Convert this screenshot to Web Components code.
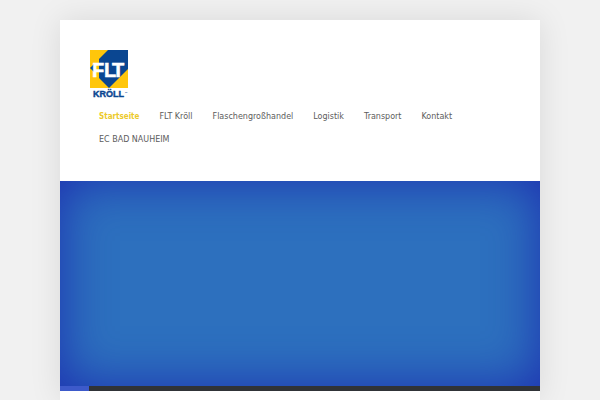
<!DOCTYPE html>
<html lang="de">
<head>
<meta charset="utf-8">
<meta name="viewport" content="width=device-width, initial-scale=1">
<title>FLT Kröll</title>
<style>
  body { margin: 0; background: #f1f1f1; color: #5c5c5c; font: 8px/23px "DejaVu Sans", sans-serif; }
</style>
</head>
<body>
<site-page>
  <site-header slot="header">
    <site-logo></site-logo>
    <site-nav>
      <nav-item href="#start" current>Startseite</nav-item>
      <nav-item href="#flt">FLT Kröll</nav-item>
      <nav-item href="#flaschen">Flaschengroßhandel</nav-item>
      <nav-item href="#logistik">Logistik</nav-item>
      <nav-item href="#transport">Transport</nav-item>
      <nav-item href="#kontakt">Kontakt</nav-item>
      <nav-item href="#ec">EC BAD NAUHEIM</nav-item>
    </site-nav>
  </site-header>
  <hero-slider></hero-slider>
</site-page>
<script>
  const define = (name, html, setup) => customElements.define(name, class extends HTMLElement {
    constructor() {
      super();
      this.attachShadow({ mode: "open" }).innerHTML = html;
    }
    connectedCallback() { if (setup) setup(this); }
  });

  define("site-page", `
    <style>
      :host { display: block; overflow: hidden; }
      .sheet { width: 80%; min-height: calc(100vh - 20px); margin: 20px auto 0; background: #fff; box-shadow: 0 0 30px rgba(0,0,0,.1); }
    </style>
    <div class="sheet"><slot name="header"></slot><main><slot></slot></main></div>`);

  define("site-header", `
    <style>:host { display: block; } header { padding: 30px; }</style>
    <header><slot></slot></header>`);

  define("site-logo", `
    <style>
      :host { display: block; }
      a { display: inline-block; vertical-align: top; }
      svg { display: block; width: 38px; height: 48px; }
      text { font-family: "Liberation Sans", sans-serif; font-weight: bold; }
    </style>
    <a href="#start" aria-label="FLT Kröll">
      <svg viewBox="0 0 38 48">
        <path fill="#ffc60b" d="M0 0h38v38H0z"/>
        <path fill="#0a4691" d="M18 0h20v19L19 38 9 28V9z"/>
        <path fill="#0a4691" d="M0 18l4-4v8z"/>
        <text x="2 14 22" y="27" font-size="20" fill="#fff" stroke="#fff" stroke-width=".5">FLT</text>
        <text x="3" y="47" font-size="9" fill="#0a4691" stroke="#0a4691" stroke-width=".4">KRÖLL</text>
        <text x="35" y="43" font-size="2" fill="#0a4691">eK</text>
      </svg>
    </a>`);

  define("site-nav", `
    <style>
      :host { display: block; padding: 7px 9px 0; }
      nav { display: flex; flex-wrap: wrap; column-gap: 20px; }
    </style>
    <nav aria-label="Hauptmenü"><slot></slot></nav>`);

  define("nav-item", `
    <style>
      :host { display: block; white-space: nowrap; }
      a { color: inherit; text-decoration: none; }
      :host([current]) a { color: #ecca2c; font-family: "DejaVu Sans Condensed", "DejaVu Sans", sans-serif; font-weight: bold; }
    </style>
    <a><slot></slot></a>`, el => {
      const link = el.shadowRoot.querySelector("a");
      link.href = el.getAttribute("href");
      if (el.hasAttribute("current")) link.setAttribute("aria-current", "page");
    });

  define("hero-slider", `
    <style>
      :host { display: block; }
      .slide { aspect-ratio: 96 / 41; background: #2d70be; box-shadow: inset 0 0 50px #1d2fb0; }
      .track { height: 5px; background: #303337; }
      .bar { width: 6%; height: 100%; background: #3d5aca; }
    </style>
    <div class="slide"></div>
    <div class="track"><div class="bar"></div></div>`);
</script>
</body>
</html>
